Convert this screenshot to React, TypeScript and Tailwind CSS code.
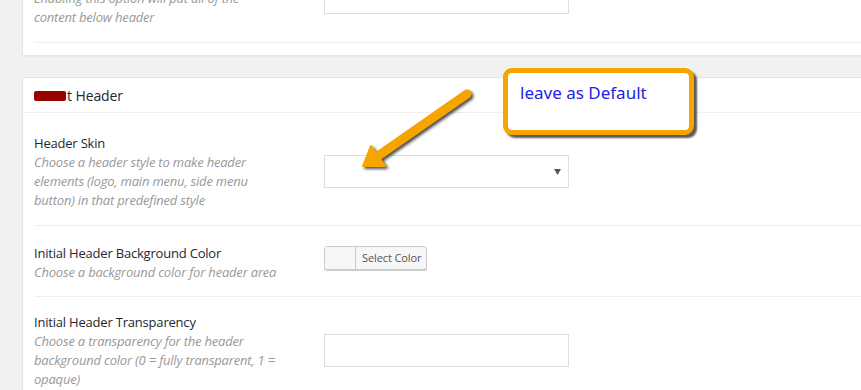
import React from "react";

const font = "font-['Open_Sans',sans-serif]";

function Desc({ lines }: { lines: string[] }) {
  return (
    <div className="italic text-[#999] text-[13px] leading-[19px] tracking-[-0.2px]">
      {lines.map((l, i) => (
        <div key={i} className="whitespace-nowrap">
          {l}
        </div>
      ))}
    </div>
  );
}

function Label({ children }: { children: React.ReactNode }) {
  return (
    <div className="text-[#23282d] text-[13px] leading-[19px] tracking-[-0.2px] whitespace-nowrap">
      {children}
    </div>
  );
}

export default function App() {
  return (
    <div className={`relative h-[390px] w-[861px] overflow-hidden bg-[#f1f1f1] pl-[22px] ${font}`}>
      {/* Panel 1 (cut at top) */}
      <div className="-mt-[12px] w-[900px] border border-[#e5e5e5] bg-white pb-[12px] pl-[11px] shadow-[0_1px_1px_rgba(0,0,0,0.04)]">
        <div className="grid grid-cols-[290px_1fr] border-b border-[#eee] pb-[15px]">
          <div>
            <Desc lines={["Enabling this option will put all of the", "content below header"]} />
          </div>
          <div className="-mt-[8px]">
            <div className="h-[33px] w-[245px] border border-[#ddd] bg-white" />
          </div>
        </div>
      </div>

      {/* Panel 2 */}
      <div className="mt-[21px] w-[900px] border border-[#e5e5e5] bg-white shadow-[0_1px_1px_rgba(0,0,0,0.04)]">
        <div className="flex h-[35px] items-center border-b border-[#eee] pl-[11px] pt-[1px] text-[14px] text-[#23282d]">
          <span className="mr-[1px] inline-block h-[10px] w-[32px] rounded-[2px] bg-[#990000]" />
          <span className="tracking-[-0.1px]">t Header</span>
        </div>
        <div className="pl-[11px]">
          {/* Header Skin */}
          <div className="grid grid-cols-[290px_1fr] border-b border-[#eee] pb-[15px] pt-[21px]">
            <div>
              <Label>Header Skin</Label>
              <Desc
                lines={[
                  "Choose a header style to make header",
                  "elements (logo, main menu, side menu",
                  "button) in that predefined style",
                ]}
              />
            </div>
            <div className="pt-[21px]">
              <div className="relative h-[33px] w-[245px] border border-[#ddd] bg-white">
                <svg className="absolute right-[7px] top-[13px]" width="7" height="6" viewBox="0 0 7 6">
                  <path d="M0 0 L7 0 L3.5 6 Z" fill="#555" />
                </svg>
              </div>
            </div>
          </div>

          {/* Background color */}
          <div className="grid grid-cols-[290px_1fr] border-b border-[#eee] pb-[14px] pt-[18px]">
            <div>
              <Label>Initial Header Background Color</Label>
              <Desc lines={["Choose a background color for header area"]} />
            </div>
            <div className="pt-[2px]">
              <div className="flex h-[24px] w-[103px] overflow-hidden rounded-[3px] border border-[#ccc] bg-[#f7f7f7] shadow-[0_1px_0_#ccc]">
                <div className="w-[31px] border-r border-[#ccc] bg-[#f7f7f7]" />
                <div className="flex flex-1 items-center pl-[6px] text-[11px] tracking-[-0.1px] text-[#555]">
                  Select Color
                </div>
              </div>
            </div>
          </div>

          {/* Transparency */}
          <div className="grid grid-cols-[290px_1fr] pb-[14px] pt-[16px]">
            <div>
              <Label>Initial Header Transparency</Label>
              <Desc
                lines={[
                  "Choose a transparency for the header",
                  "background color (0 = fully transparent, 1 =",
                  "opaque)",
                ]}
              />
            </div>
            <div className="pt-[21px]">
              <div className="h-[33px] w-[245px] border border-[#ddd] bg-white" />
            </div>
          </div>
        </div>
      </div>

      {/* Annotation arrow */}
      <svg
        className="absolute left-[350px] top-[80px] drop-shadow-[2px_2px_1.5px_rgba(0,0,0,0.7)]"
        width="130"
        height="100"
        viewBox="0 0 130 100"
      >
        <line x1="117" y1="14" x2="28" y2="76" stroke="#f6a400" strokeWidth="9" strokeLinecap="round" />
        <path d="M13 86 L21 66 L35 86 Z" fill="#f6a400" stroke="#f6a400" strokeWidth="2" strokeLinejoin="round" />
      </svg>

      {/* Annotation callout */}
      <div className="absolute left-[503px] top-[68px] h-[67px] w-[191px] rounded-[9px] border-[5px] border-[#f6a400] bg-white pl-[12px] pt-[9px] shadow-[3px_3px_2px_rgba(0,0,0,0.65)]">
        <div className="text-[17px] leading-[22px] text-[#2222e6] font-['Noto_Sans',sans-serif]">
          leave as Default
        </div>
      </div>
    </div>
  );
}
